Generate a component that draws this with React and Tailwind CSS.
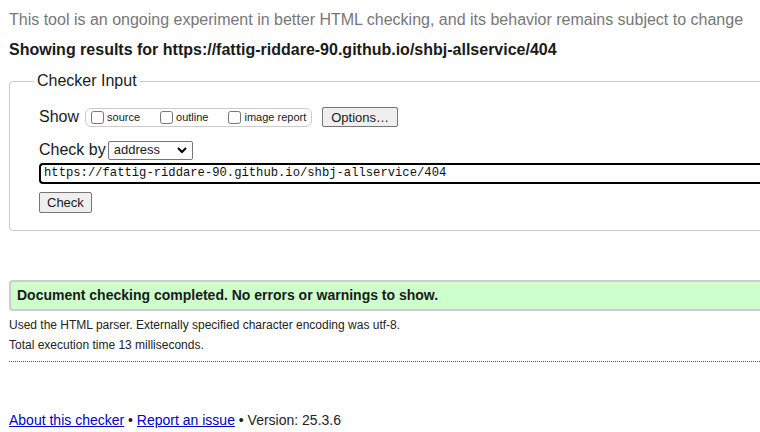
import React from 'react';

export default function App() {
    return (
        <div className="w-[760px] h-[432px] overflow-hidden bg-white text-[#1a1a1a]" style={{ fontFamily: '"Liberation Sans", Arial, sans-serif' }}>
            <div className="w-[800px] pl-[9px]">
                <p className="pt-[10px] text-[16px] leading-[20px] text-[#777]">
                    This tool is an ongoing experiment in better HTML checking, and its behavior remains subject to change
                </p>
                <h2 className="mt-[10px] text-[16px] leading-[20px] font-bold">
                    Showing results for https://fattig-riddare-90.github.io/shbj-allservice/404
                </h2>

                {/* Checker input */}
                <fieldset className="mt-[12px] border border-[#ccc] rounded-[4px] pl-[29px] pr-2 pt-[16px] pb-[16px]">
                    <legend className="ml-[-5px] px-[3px] text-[16px] leading-[18px]">Checker Input</legend>

                    <div className="flex items-center h-[22px]">
                        <span className="text-[16px] mr-[6px]">Show</span>
                        <div className="flex items-center h-[19px] border border-[#ccc] rounded-[6px] pl-[5px] pr-[5px] text-[11px]">
                            <label className="flex items-center">
                                <input type="checkbox" className="w-[13px] h-[13px] m-0 mr-[3px]" />
                                <span>source</span>
                            </label>
                            <label className="flex items-center ml-[20px]">
                                <input type="checkbox" className="w-[13px] h-[13px] m-0 mr-[3px]" />
                                <span>outline</span>
                            </label>
                            <label className="flex items-center ml-[20px]">
                                <input type="checkbox" className="w-[13px] h-[13px] m-0 mr-[3px]" />
                                <span>image report</span>
                            </label>
                        </div>
                        <button className="ml-[10px] h-[20px] px-[8px] text-[13px] border border-[#767676] rounded-[2px] bg-[#efefef]">
                            Options…
                        </button>
                    </div>

                    <div className="flex items-center mt-[12px] h-[20px]">
                        <span className="text-[16px] mr-[2px]">Check by</span>
                        <div className="relative h-[19px] w-[85px] border border-[#767676] rounded-[2px] text-[13px] flex items-center pl-[5px]">
                            address
                            <svg className="absolute right-[5px] top-[5px]" width="10" height="7" viewBox="0 0 10 7">
                                <path d="M1 1 L5 5 L9 1" fill="none" stroke="#000" strokeWidth="2" />
                            </svg>
                        </div>
                    </div>

                    <div className="mt-[3px] h-[21px] border-2 border-black rounded-l-[4px] border-r-0 flex items-center pl-[3px] -mr-2">
                        <span className="text-[12.2px] text-[#111]" style={{ fontFamily: '"Liberation Mono", "DejaVu Sans Mono", monospace' }}>
                            https://fattig-riddare-90.github.io/shbj-allservice/404
                        </span>
                    </div>

                    <button className="mt-[8px] h-[21px] px-[7px] text-[13px] border border-[#767676] rounded-[2px] bg-[#efefef]">
                        Check
                    </button>
                </fieldset>

                {/* Result */}
                <div className="mt-[49px] h-[31px] bg-[#ccffcc] border-y-2 border-l-2 border-[#ccc] rounded-l-[4px] flex items-center pl-[6px]">
                    <span className="text-[14px] font-bold">Document checking completed. No errors or warnings to show.</span>
                </div>

                <p className="mt-[4px] text-[12px] leading-[20px] text-[#222]">Used the HTML parser. Externally specified character encoding was utf-8.</p>
                <p className="text-[12px] leading-[20px] text-[#222]">Total execution time 13 milliseconds.</p>
                <div className="mt-[6px] border-t border-dotted border-[#555]" />

                <p className="mt-[48px] text-[14px] text-[#222]">
                    <a href="#" className="text-[#0000cc] underline">About this checker</a>
                    {' • '}
                    <a href="#" className="text-[#0000cc] underline">Report an issue</a>
                    {' • Version: 25.3.6'}
                </p>
            </div>
        </div>
    );
}
